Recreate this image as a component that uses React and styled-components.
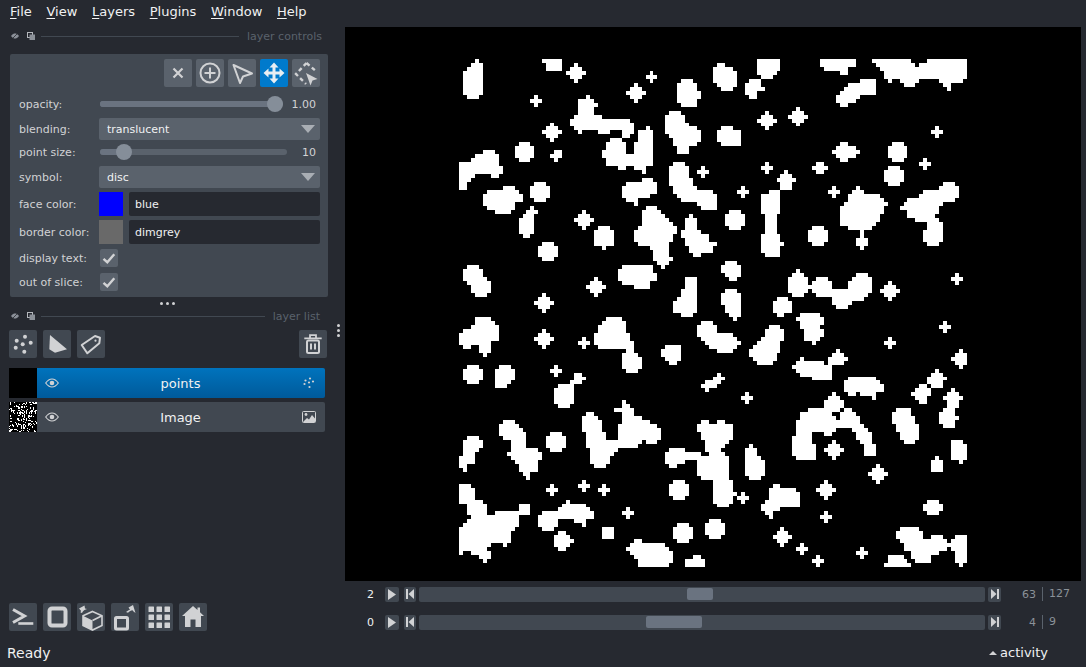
import React from 'react'
import styled, { createGlobalStyle } from 'styled-components'

const ICON = '#d1d2d4'
const PANEL = '#414851'
const PRIMARY = '#5a626c'

// blobs traced from the picture, coordinates are 3x crops with an offset
const REGIONS = [
  {
    ox: 450, oy: 50,
    stars: [[378, 69, 2], [603, 81, 1], [557, 127, 2], [258, 150, 1], [306, 246, 2], [759, 366, 1], [402, 510, 2], [438, 711, 2], [282, 759, 2]],
    discs: [[222, 306], [270, 426], [294, 603]],
    polys: [
      [75,39,75,27,87,27,87,39,99,39,99,132,87,132,87,144,51,144,51,132,39,132,39,63,51,63,51,51,63,51,63,39],
      [276,27,336,27,336,63,288,63,288,39,276,39],
      [693,87,729,87,729,99,741,99,741,123,753,123,753,144,741,144,741,168,693,168,693,156,681,156,681,99,693,99],
      [384,144,408,144,408,132,420,132,420,144,432,144,432,156,444,156,444,168,432,168,432,192,456,192,456,204,540,204,540,216,552,216,552,252,540,252,540,264,516,264,516,240,480,240,480,252,444,252,444,240,396,240,396,252,384,252,384,240,372,240,372,228,360,228,360,204,372,204,372,192,384,192],
      [492,264,516,264,516,276,528,276,528,312,552,312,552,276,564,276,564,240,588,240,588,228,600,228,600,240,609,240,609,348,588,348,588,360,585,372,576,372,576,360,552,360,552,348,528,348,528,360,504,360,504,348,468,348,468,324,456,324,456,300,468,300,468,276,480,276,480,264],
      [657,180,693,180,693,192,705,192,705,216,717,216,717,228,741,228,741,240,753,240,753,276,741,276,741,288,717,288,717,312,681,312,681,288,669,288,669,264,657,264,657,252,645,252,645,192,657,192],
      [312,300,336,300,336,324,324,324,324,336,312,336,312,324,300,324,300,312,312,312],
      [99,300,135,300,135,312,147,312,147,348,156,348,156,372,147,372,147,384,123,384,123,372,75,372,75,384,63,384,63,396,51,396,51,420,27,420,27,336,63,336,63,324,75,324,75,312,99,312],
      [159,408,192,408,192,420,204,420,204,432,216,432,216,456,192,456,192,480,180,480,180,492,135,492,135,480,111,480,111,468,99,468,99,432,111,432,111,420,159,420],
      [576,384,609,384,609,396,621,396,621,432,597,432,597,444,564,444,564,468,552,468,552,456,528,456,528,444,516,444,516,408,528,408,528,396,576,396],
      [669,336,705,336,705,348,717,348,717,384,729,384,729,408,741,408,741,420,789,420,789,432,801,432,801,480,753,480,753,468,741,468,741,456,693,456,693,444,681,444,681,432,669,432,669,408,657,408,657,348,669,348],
      [240,468,252,468,252,480,264,480,264,492,252,492,252,552,240,552,240,560,216,560,216,552,204,552,204,504,216,504,216,492,228,492,228,480,240,480],
      [444,528,480,528,480,540,492,540,492,585,468,585,468,597,456,597,456,585,432,585,432,540,444,540],
      [588,468,621,468,621,480,633,480,633,492,645,492,645,504,657,504,657,516,669,516,669,528,681,528,681,552,669,552,669,572,657,572,657,620,669,620,669,632,657,632,657,644,645,644,645,656,633,656,633,644,621,644,621,632,609,632,609,597,597,597,597,585,564,585,564,572,552,572,552,540,564,540,564,528,576,528,576,480,588,480],
      [717,492,729,492,729,504,741,504,741,540,753,540,753,552,777,552,777,572,801,572,801,585,789,585,789,609,753,609,753,620,729,620,729,609,717,609,717,585,705,585,705,560,693,560,693,540,705,540,705,504,717,504],
      [51,645,87,645,87,657,99,657,99,681,111,681,111,693,123,693,123,729,111,729,111,740,75,740,75,729,63,729,63,705,51,705,51,693,39,693,39,657,51,657],
      [516,645,609,645,609,669,621,669,621,693,597,693,597,717,552,717,552,705,516,705,516,693,504,693,504,657,516,657],
      [705,681,741,681,741,789,729,789,729,801,693,801,693,789,669,789,669,753,681,753,681,741,693,741,693,717,705,717],
    ],
  },
  {
    ox: 710, oy: 50,
    stars: [[171, 210, 2], [264, 198, 2], [681, 246, 1], [645, 342, 1], [171, 354, 1], [99, 426, 1], [372, 426, 1], [741, 687, 1], [540, 723, 2]],
    discs: [[564, 306], [552, 378], [75, 510], [324, 558]],
    polys: [
      [21,39,45,39,45,51,69,51,69,63,81,63,81,111,69,111,69,123,33,123,33,111,21,111,21,99,9,99,9,51,21,51],
      [141,27,213,27,213,63,201,63,201,75,189,75,189,87,153,87,153,75,141,75],
      [117,87,153,87,153,111,165,111,165,123,141,123,141,144,117,144,117,132,105,132,105,99,117,99],
      [330,27,438,27,438,51,414,51,414,75,390,75,390,63,342,63,342,51,330,51],
      [486,27,606,27,606,39,618,39,618,51,630,51,630,39,654,39,654,27,771,27,771,87,759,87,759,99,723,99,723,123,711,123,711,111,699,111,699,99,687,99,687,87,630,87,630,99,618,99,618,111,582,111,582,99,570,99,570,87,546,87,546,99,534,99,534,87,522,87,522,63,510,63,510,51,498,51,498,39,486,39],
      [450,87,498,87,498,132,450,132,450,144,438,144,438,156,414,156,414,168,390,168,390,156,378,156,378,132,390,132,390,120,402,120,402,108,414,108,414,99,450,99],
      [33,228,69,228,69,240,93,240,93,288,33,288,33,276,21,276,21,240,33,240],
      [390,276,414,276,414,288,438,288,438,300,450,300,450,312,438,312,438,324,414,324,414,336,390,336,390,324,378,324,378,312,366,312,366,300,378,300,378,288,390,288],
      [318,336,342,336,342,348,354,348,354,360,342,360,342,372,318,372,318,360,306,360,306,348,318,348],
      [222,360,234,360,234,372,246,372,246,384,258,384,258,396,246,396,246,420,210,420,210,396,201,396,201,384,210,384,210,372,222,372],
      [177,420,213,420,213,492,201,492,201,549,213,549,213,573,222,573,222,585,213,585,213,621,165,621,165,609,153,609,153,549,165,549,165,492,153,492,153,432,177,432],
      [438,408,450,408,450,420,462,420,462,432,510,432,510,444,522,444,522,456,534,456,534,468,522,468,522,492,510,492,510,516,498,516,498,528,486,528,486,540,414,540,414,528,390,528,390,468,402,468,402,456,414,456,414,432,426,432,426,420,438,420],
      [450,540,462,540,462,561,474,561,474,585,462,585,462,597,450,597,450,585,438,585,438,561,450,561],
      [699,396,735,396,735,408,747,408,747,444,735,444,735,456,699,456,699,468,687,468,687,492,675,492,675,504,687,504,687,516,699,516,699,573,687,573,687,585,651,585,651,573,642,573,642,540,651,540,651,516,618,516,618,504,594,504,594,480,570,480,570,468,582,468,582,456,594,456,594,444,630,444,630,432,642,432,642,420,687,420,687,408,699,408],
      [45,633,81,633,81,645,93,645,93,681,81,681,81,693,57,693,57,681,45,681,45,669,33,669,33,645,45,645],
      [45,717,81,717,81,729,93,729,93,801,81,801,81,813,69,813,69,801,57,801,57,789,45,789,45,765,33,765,33,729,45,729],
      [201,741,237,741,237,753,246,753,246,789,225,789,225,801,201,801,201,789,189,789,189,753,201,753],
      [258,657,270,657,270,669,282,669,282,681,294,681,294,705,306,705,306,693,318,693,318,681,354,681,354,693,366,693,366,717,414,717,414,693,426,693,426,681,438,681,438,669,474,669,474,681,486,681,486,729,474,729,474,741,462,741,462,753,426,753,426,765,414,765,414,777,378,777,378,765,366,765,366,741,318,741,318,729,306,729,306,717,294,717,294,729,282,729,282,741,246,741,246,729,234,729,234,681,246,681,246,669,258,669],
    ],
  },
  {
    ox: 450, oy: 305,
    stars: [[282, 102, 2], [402, 114, 1], [318, 198, 1], [306, 555, 1], [402, 543, 1], [462, 555, 1], [534, 627, 1]],
    discs: [[69, 210], [318, 411], [687, 555], [699, 684]],
    polys: [
      [75,36,123,36,123,48,135,48,135,60,147,60,147,108,123,108,123,144,111,144,111,156,99,156,99,144,87,144,87,120,63,120,63,132,39,132,39,120,27,120,27,84,39,84,39,72,63,72,63,60,75,60],
      [468,36,516,36,516,48,528,48,528,84,540,84,540,108,552,108,552,144,564,144,564,156,576,156,576,192,564,192,564,204,528,204,528,192,516,192,516,144,528,144,528,132,444,132,444,120,432,120,432,84,444,84,444,60,456,60,456,48,468,48],
      [645,120,693,120,693,168,681,168,681,180,657,180,657,168,645,168,645,156,633,156,633,132,645,132],
      [753,48,789,48,789,60,801,60,801,84,849,84,849,96,861,96,861,108,873,108,873,120,861,120,861,132,849,132,849,144,801,144,801,132,780,132,780,120,768,120,768,108,753,108,753,96,741,96,741,60,753,60],
      [147,180,180,180,180,192,192,192,192,228,180,228,180,237,168,237,168,249,135,249,135,192,147,192],
      [372,204,396,204,396,216,408,216,408,228,396,228,396,237,372,237,372,297,360,297,360,309,324,309,324,297,312,297,312,249,324,249,324,237,360,237,360,225,372,225],
      [801,204,813,204,813,216,825,216,825,228,813,228,813,237,801,237,801,249,777,249,777,261,765,261,765,249,753,249,753,237,765,237,765,228,789,228,789,216,801,216],
      [516,285,528,285,528,297,540,297,540,309,552,309,552,333,576,333,576,345,597,345,597,357,621,357,621,369,633,369,633,405,621,405,621,417,585,417,585,405,576,405,576,417,564,417,564,429,504,429,504,441,492,441,492,453,480,453,480,477,468,477,468,489,432,489,432,477,420,477,420,429,408,429,408,381,396,381,396,333,408,333,408,321,432,321,432,333,444,333,444,345,456,345,456,381,468,381,468,405,504,405,504,357,516,357,516,321,492,321,492,309,516,309],
      [159,345,192,345,192,357,204,357,204,369,216,369,216,381,228,381,228,429,264,429,264,441,276,441,276,465,264,465,264,501,240,501,240,525,228,525,228,513,216,513,216,501,204,501,204,477,192,477,192,465,180,465,180,453,168,453,168,441,180,441,180,405,159,405,159,393,147,393,147,357,159,357],
      [51,393,87,393,87,405,99,405,99,429,87,429,87,441,75,441,75,477,51,477,51,500,39,500,39,489,27,489,27,453,39,453,39,405,51,405],
      [741,357,753,357,753,345,777,345,777,357,801,357,801,345,825,345,825,357,849,357,849,405,837,405,837,417,825,417,825,429,813,429,813,441,825,441,825,453,837,453,837,525,849,525,849,561,861,561,861,573,849,573,849,597,837,597,837,609,801,609,801,597,789,597,789,525,753,525,753,513,741,513,741,465,705,465,705,477,681,477,681,489,657,489,657,477,645,477,645,441,657,441,657,429,705,429,705,441,753,441,753,453,777,453,777,441,765,441,765,405,753,405,753,381,741,381],
      [27,537,63,537,63,549,75,549,75,585,99,585,99,597,111,597,111,633,135,633,135,621,204,621,204,597,240,597,240,633,204,633,204,665,192,665,192,677,180,677,180,713,168,713,168,725,156,725,156,713,123,713,123,725,111,725,111,737,123,737,123,761,111,761,111,773,99,773,99,761,87,761,87,749,63,749,63,737,39,737,39,749,27,749,27,665,39,665,39,653,51,653,51,641,63,641,63,633,51,633,51,597,27,597],
      [348,585,360,585,360,597,408,597,408,609,420,609,420,621,432,621,432,641,408,641,408,665,396,665,396,653,372,653,372,641,324,641,324,665,312,665,312,677,276,677,276,665,264,665,264,633,276,633,276,621,324,621,324,609,336,609,336,597,348,597],
      [324,678,348,678,348,690,360,690,360,702,372,702,372,714,360,714,360,726,348,726,348,738,324,738,324,726,312,726,312,690,324,690],
      [456,665,492,665,492,702,456,702],
      [777,642,813,642,813,654,825,654,825,690,813,690,813,702,777,702,777,690,765,690,765,654,777,654],
      [552,702,576,702,576,714,645,714,645,726,657,726,657,738,669,738,669,774,657,774,657,787,564,787,564,762,552,762,552,750,540,750,540,738,528,738,528,726,540,726,540,714,552,714],
      [717,762,729,762,729,750,753,750,753,762,765,762,765,787,705,787,705,762],
    ],
  },
  {
    ox: 710, oy: 305,
    stars: [[99, 579, 1], [705, 66, 1], [540, 114, 1], [111, 279, 1], [372, 435, 2], [504, 507, 2], [348, 555, 2], [348, 636, 1], [216, 696, 2], [276, 732, 1], [324, 768, 1], [456, 744, 1]],
    discs: [],
    polys: [
      [270,24,330,24,330,36,342,36,342,60,330,60,330,72,342,72,342,96,330,96,330,108,318,108,318,120,306,120,306,108,282,108,282,72,270,72,270,48,258,48,258,36,270,36],
      [180,60,210,60,210,72,222,72,222,108,210,108,210,144,198,144,198,168,189,168,189,180,141,180,141,168,129,168,129,156,117,156,117,132,129,132,129,120,141,120,141,108,153,108,153,96,165,96,165,72,180,72],
      [747,132,759,132,759,144,771,144,771,180,759,180,759,192,747,192,747,180,735,180,735,168,723,168,723,156,735,156,735,144,747,144],
      [378,132,390,132,390,144,402,144,402,156,414,156,414,168,402,168,402,180,366,180,366,225,306,225,306,213,270,213,270,201,258,201,258,192,246,192,246,180,258,180,258,168,270,168,270,156,282,156,282,168,342,168,342,180,354,180,354,156,366,156,366,144,378,144],
      [414,213,498,213,498,225,510,225,510,237,522,237,522,261,498,261,498,285,486,285,486,273,450,273,450,261,438,261,438,273,414,273,414,261,402,261,402,225,414,225],
      [675,192,687,192,687,204,699,204,699,216,711,216,711,225,699,225,699,249,663,249,663,237,651,237,651,216,663,216,663,204,675,204],
      [627,237,651,237,651,249,663,249,663,273,651,273,651,297,627,297,627,285,615,285,615,273,606,273,606,261,615,261,615,249,627,249],
      [723,249,735,249,735,261,747,261,747,273,759,273,759,285,747,285,747,309,735,309,735,333,747,333,747,345,735,345,735,369,699,369,699,357,687,357,687,321,699,321,699,309,711,309,711,285,699,285,699,273,711,273,711,261,723,261],
      [366,261,378,261,378,273,390,273,390,285,402,285,402,309,426,309,426,321,438,321,438,333,450,333,450,357,462,357,462,369,474,369,474,381,486,381,486,417,498,417,498,453,462,453,462,417,450,417,450,405,438,405,438,381,426,381,426,369,378,369,378,381,366,381,366,393,342,393,342,381,306,381,306,417,318,417,318,465,258,465,258,453,246,453,246,393,258,393,258,345,270,345,270,321,294,321,294,309,342,309,342,285,354,285,354,273,366,273],
      [558,309,606,309,606,333,618,333,618,357,630,357,630,405,618,405,618,417,582,417,582,405,570,405,570,381,558,381,558,357,546,357,546,321,558,321],
      [723,405,759,405,759,417,771,417,771,465,759,465,759,477,747,477,747,465,723,465],
      [675,465,675,453,687,453,687,465,699,465,699,501,663,501,663,465],
      [117,417,129,417,129,429,141,429,141,453,153,453,153,465,165,465,165,513,153,513,153,525,117,525,117,513,105,513,105,429,117,429],
      [189,537,213,537,213,549,258,549,258,561,270,561,270,609,213,609,213,621,189,621,189,642,177,642,177,630,165,630,165,621,153,621,153,597,165,597,165,585,177,585,177,549,189,549],
      [654,585,687,585,687,597,699,597,699,621,687,621,687,633,654,633,654,621,642,621,642,597,654,597],
      [570,666,630,666,630,678,642,678,642,702,660,702,660,690,699,690,699,702,711,702,711,714,723,714,723,702,735,702,735,690,771,690,771,774,759,774,759,787,747,787,747,774,735,774,735,738,723,738,723,726,711,726,711,738,687,738,687,750,663,750,663,774,618,774,618,762,606,762,606,738,582,738,582,714,570,714,570,702,558,702,558,678,570,678],
      [534,762,534,750,582,750,582,762,594,762,594,774,606,774,606,787,522,787,522,774,534,774],
    ],
    holes: [[366,321,390,321,390,345,378,345,378,333,366,333], [390,309,402,309,402,321,390,321]],
  },
]

// the image is 128 cells wide, drawn over 508 screen pixels
const GRID_SIZE = 128
const GRID_X = 459
const GRID_Y = 59
const PITCH = 508 / GRID_SIZE

const inside = (pts, x, y) => {
  let hit = false
  for (let i = 0, j = pts.length - 2; i < pts.length; j = i, i += 2) {
    const yi = pts[i + 1]
    const yj = pts[j + 1]
    if (yi > y !== yj > y && x < ((pts[j] - pts[i]) * (y - yi)) / (yj - yi) + pts[i]) hit = !hit
  }
  return hit
}

const buildGrid = () => {
  const grid = Array.from({ length: GRID_SIZE }, () => new Array(GRID_SIZE).fill(false))
  const set = (c, r, value) => {
    if (grid[r] && c >= 0 && c < GRID_SIZE) grid[r][c] = value
  }
  const fillPoly = (region, pts, value) => {
    for (let r = 0; r < GRID_SIZE; r++) {
      for (let c = 0; c < GRID_SIZE; c++) {
        const x = (GRID_X + PITCH * (c + 0.5) - region.ox) * 3
        const y = (GRID_Y + PITCH * (r + 0.5) - region.oy) * 3
        if (inside(pts, x, y)) set(c, r, value)
      }
    }
  }
  const toCell = (region, x, y) => [
    Math.floor((x / 3 + region.ox - GRID_X) / PITCH),
    Math.floor((y / 3 + region.oy - GRID_Y) / PITCH),
  ]
  REGIONS.forEach(region => {
    region.polys.forEach(pts => fillPoly(region, pts, true))
    region.stars.forEach(([x, y, size]) => {
      const [c, r] = toCell(region, x, y)
      for (let dy = -size; dy <= size; dy++) {
        for (let dx = -size; dx <= size; dx++) {
          if (Math.abs(dx) + Math.abs(dy) <= size) set(c + dx, r + dy, true)
        }
      }
    })
    region.discs.forEach(([x, y]) => {
      const [c, r] = toCell(region, x, y)
      for (let dy = -2; dy <= 2; dy++) {
        for (let dx = -2; dx <= 2; dx++) {
          if (dx * dx + dy * dy <= 5) set(c + dx, r + dy, true)
        }
      }
    })
  })
  REGIONS.forEach(region => (region.holes || []).forEach(pts => fillPoly(region, pts, false)))
  return grid
}

const gridToPath = rows => {
  let d = ''
  rows.forEach((row, r) => {
    let start = -1
    for (let c = 0; c <= row.length; c++) {
      if (row[c] && start < 0) start = c
      if (!row[c] && start >= 0) {
        d += `M${start} ${r}h${c - start}v1h${start - c}z`
        start = -1
      }
    }
  })
  return d
}

const GRID = buildGrid()
const IMAGE_PATH = gridToPath(GRID)
const THUMB_PATH = gridToPath(
  Array.from({ length: 30 }, (_, r) =>
    Array.from({ length: 28 }, (_, c) => GRID[Math.floor((r * GRID_SIZE) / 30)][Math.floor((c * GRID_SIZE) / 28)]),
  ),
)

const GlobalStyle = createGlobalStyle`
  html, body {
    margin: 0;
    padding: 0;
    background: #262930;
  }
  * {
    box-sizing: border-box;
  }
`

const Window = styled.div`
  width: 1086px;
  height: 667px;
  display: flex;
  flex-direction: column;
  overflow: hidden;
  background: #262930;
  color: #f0f1f2;
  font-family: "DejaVu Sans", sans-serif;
`

const MenuBar = styled.div`
  height: 27px;
  flex: none;
  display: flex;
  gap: 14.7px;
  padding: 3px 0 0 10px;
  font-size: 13px;
  line-height: 17px;
  color: #f0f1f2;
  u {
    text-underline-offset: 2px;
  }
`

const Main = styled.div`
  flex: 1;
  display: flex;
  min-height: 0;
`

const LeftDock = styled.div`
  width: 330px;
  flex: none;
  display: flex;
  flex-direction: column;
  padding-bottom: 9px;
`

const TitleBar = styled.div`
  height: 18px;
  flex: none;
  display: flex;
  align-items: center;
  padding-left: 11px;
  font-size: 11px;
  color: ${PRIMARY};
`

const TitleIconGroup = styled.div`
  display: flex;
  gap: 8px;
  align-items: center;
  svg {
    display: block;
  }
`

const TitleLine = styled.div`
  flex: 1;
  height: 1px;
  margin: 0 8px 0 6px;
  background: ${PANEL};
`

const TitleLabel = styled.span`
  margin-right: ${props => props.$right}px;
  padding-top: 2px;
  line-height: 18px;
`

const ControlsPanel = styled.div`
  margin: 9px 2px 0 10px;
  height: 243px;
  padding: 5px 8px 0 9px;
  background: ${PANEL};
  border-radius: 2px;
  display: flex;
  flex-direction: column;
`

const ModeButtons = styled.div`
  display: flex;
  justify-content: flex-end;
  gap: 4px;
  margin-bottom: 5px;
`

const IconButton = styled.div`
  width: 28px;
  height: 28px;
  flex: none;
  border-radius: 2px;
  background: ${props => (props.$active ? '#007acc' : props.$tone || PANEL)};
  svg {
    display: block;
  }
`

const ControlRow = styled.div`
  height: ${props => props.$h}px;
  margin-top: ${props => props.$mt || 0}px;
  flex: none;
  display: flex;
  align-items: center;
  font-size: 11px;
  color: #d1d2d4;
`

const RowLabel = styled.div`
  width: 80px;
  flex: none;
  white-space: nowrap;
`

const SliderTrack = styled.div`
  width: ${props => props.$w}px;
  height: 6px;
  margin-left: 1px;
  border-radius: 3px;
  flex: none;
  display: flex;
  align-items: center;
  background: ${props => props.$tone || PRIMARY};
`

const SliderFill = styled.div`
  width: ${props => props.$w}px;
  height: 6px;
  flex: none;
  border-radius: 3px 0 0 3px;
  background: #6a7380;
`

const SliderThumb = styled.div`
  width: 16px;
  height: 16px;
  flex: none;
  margin-left: -8px;
  border-radius: 50%;
  background: #858e99;
`

const SliderValue = styled.div`
  margin-left: auto;
  width: 30px;
  margin-right: 4px;
  text-align: right;
  color: #d1d2d4;
`

const Combo = styled.div`
  width: 221px;
  height: 22px;
  flex: none;
  display: flex;
  align-items: center;
  justify-content: space-between;
  padding: 0 5px 0 8px;
  border-radius: 2px;
  background: ${PRIMARY};
  color: #f0f1f2;
  &::after {
    content: '';
    border-left: 7.5px solid transparent;
    border-right: 7.5px solid transparent;
    border-top: 8px solid #a9aeb4;
  }
`

const Swatch = styled.div`
  width: 24px;
  height: 24px;
  flex: none;
  background: ${props => props.$color};
`

const ColorInput = styled.div`
  width: 191px;
  height: 24px;
  margin-left: 6px;
  flex: none;
  padding-left: 6px;
  line-height: 25px;
  border-radius: 2px;
  background: #262930;
  color: #f0f1f2;
`

const CheckBox = styled.div`
  width: 18px;
  height: 18px;
  margin-left: 1px;
  flex: none;
  border-radius: 2px;
  background: ${PRIMARY};
  svg {
    display: block;
  }
`

const DotsHandle = styled.div`
  height: 10px;
  flex: none;
  display: flex;
  justify-content: center;
  align-items: flex-end;
  gap: 3px;
  padding: 0 0 2px 5px;
  span {
    width: 3px;
    height: 3px;
    border-radius: 50%;
    background: #d1d2d4;
  }
`

const LayerButtons = styled.div`
  margin-top: 5px;
  padding: 0 3px 0 9px;
  display: flex;
  gap: 6px;
`

const DeleteSlot = styled.div`
  margin-left: auto;
`

const LayerRows = styled.div`
  margin: 10px 5px 0 9px;
  display: flex;
  flex-direction: column;
  gap: 4px;
`

const LayerRow = styled.div`
  height: 30px;
  display: flex;
  align-items: stretch;
`

const LayerThumb = styled.div`
  width: 28px;
  flex: none;
  background: #000;
  svg {
    display: block;
  }
`

const LayerBody = styled.div`
  flex: 1;
  display: flex;
  align-items: center;
  padding: 0 9px 0 8px;
  border-radius: 0 2px 2px 0;
  font-size: 13px;
  color: #f0f1f2;
  background: ${props => (props.$selected ? 'linear-gradient(#0073bd, #005a9a)' : PANEL)};
`

const LayerName = styled.div`
  flex: 1;
  text-align: center;
`

const Spacer = styled.div`
  flex: 1;
`

const BottomButtons = styled.div`
  padding-left: 9px;
  display: flex;
  gap: 6px;
`

const Splitter = styled.div`
  width: 15px;
  flex: none;
  display: flex;
  flex-direction: column;
  align-items: center;
  justify-content: center;
  gap: 2px;
  padding: 0 0 6px 1px;
  span {
    width: 3px;
    height: 3px;
    border-radius: 50%;
    background: #d1d2d4;
  }
`

const ViewerColumn = styled.div`
  width: 736px;
  flex: none;
  display: flex;
  flex-direction: column;
`

const Canvas = styled.div`
  height: 554px;
  flex: none;
  background: #000;
  display: flex;
  justify-content: center;
  align-items: flex-start;
  padding: 32px 0 0 0;
  svg {
    display: block;
  }
`

const DimRow = styled.div`
  height: 26px;
  margin-bottom: 2px;
  flex: none;
  display: flex;
  align-items: center;
`

const DimLabel = styled.div`
  width: 29px;
  flex: none;
  text-align: right;
  font-size: 11px;
  color: #f0f1f2;
`

const DimButton = styled.div`
  width: ${props => props.$w}px;
  height: 15px;
  margin-left: ${props => props.$ml}px;
  flex: none;
  border-radius: 2px;
  background: ${PANEL};
  display: flex;
  align-items: center;
  justify-content: center;
  svg {
    display: block;
  }
`

const DimTrack = styled.div`
  width: 566px;
  height: 15px;
  margin-left: 3px;
  flex: none;
  border-radius: 2px;
  background: ${PANEL};
  display: flex;
  align-items: center;
`

const DimThumb = styled.div`
  width: ${props => props.$w}px;
  height: 12px;
  margin-left: ${props => props.$left}px;
  border-radius: 2px;
  background: #6a7380;
`

const FrameValue = styled.div`
  width: 35px;
  flex: none;
  text-align: right;
  font-size: 11px;
  color: #8b9299;
`

const FrameTotal = styled.div`
  margin-left: 6px;
  padding-left: 6px;
  border-left: 1px solid #5a626c;
  line-height: 14px;
  font-size: 11px;
  color: #8b9299;
`

const StatusBar = styled.div`
  height: 27px;
  flex: none;
  display: flex;
  align-items: center;
  justify-content: space-between;
  padding: 0 38px 2px 7px;
  font-size: 14px;
  color: #f0f1f2;
`

const Activity = styled.div`
  display: flex;
  align-items: center;
  gap: 3px;
  font-size: 13px;
  &::before {
    content: '';
    border-left: 4px solid transparent;
    border-right: 4px solid transparent;
    border-bottom: 4px solid #d1d2d4;
  }
`

const Glyph = ({ children, size = 28 }) => (
  <svg width={size} height={size} viewBox={`0 0 ${size} ${size}`}>
    {children}
  </svg>
)

const CloseIcon = () => (
  <Glyph>
    <path d="M9.5 9.5l9 9M18.5 9.5l-9 9" stroke={ICON} strokeWidth="2.2" fill="none" />
  </Glyph>
)

const AddIcon = () => (
  <Glyph>
    <circle cx="14" cy="14" r="9.5" stroke={ICON} strokeWidth="2" fill="none" />
    <path d="M14 8.5v11M8.500 14h11" stroke={ICON} strokeWidth="2" fill="none" />
  </Glyph>
)

const SelectIcon = () => (
  <Glyph>
    <path d="M5.5 6L24 14.5l-9 3L12 24z" stroke={ICON} strokeWidth="2" fill="none" strokeLinejoin="round" />
  </Glyph>
)

const MoveIcon = () => (
  <Glyph>
    <path d="M14 7v14M7 14h14" stroke="#e8eef3" strokeWidth="3" fill="none" />
    <path d="M14 3.5l4.5 5h-9zM14 24.5l4.5-5h-9zM3.5 14l5-4.5v9zM24.5 14l-5-4.5v9z" fill="#e8eef3" />
  </Glyph>
)

const TransformIcon = () => (
  <Glyph>
    <path d="M14.500 4L25 13M14.500 4L4 15l10 10" stroke={ICON} strokeWidth="2.400" strokeDasharray="4 3" fill="none" />
    <path d="M14 14l11.500 6-5 1.500-2 5z" fill={ICON} />
  </Glyph>
)

const EyeIcon = () => (
  <svg width="14" height="10" viewBox="0 0 14 10">
    <path d="M.7 5C3 1.800 5 1 7 1s4 .8 6.300 4C11 8.200 9 9 7 9S3 8.200.7 5z" stroke={ICON} strokeWidth="1.200" fill="none" />
    <circle cx="7" cy="5" r="2.300" fill={ICON} />
  </svg>
)

const PointsIcon = () => (
  <Glyph>
    {[[16, 6.7], [7.7, 10.7], [21.7, 12.7], [13.7, 14.3], [6.7, 17.7], [15.3, 21.7]].map(([x, y]) => (
      <circle key={x} cx={x} cy={y} r="2" fill={ICON} />
    ))}
  </Glyph>
)

const ShapeIcon = () => (
  <Glyph>
    <path d="M7 5l17 14.300-12 3.400-5.700-3.400z" fill={ICON} />
  </Glyph>
)

const LabelIcon = () => (
  <Glyph>
    <path d="M4.700 15L18 6l5 1.700-.7 5.600-12 10z" stroke={ICON} strokeWidth="2" fill="none" strokeLinejoin="round" />
    <circle cx="18.500" cy="10.700" r="1.100" fill={ICON} />
  </Glyph>
)

const TrashIcon = () => (
  <Glyph>
    <path d="M5.300 8.300h17.400M11 8V5.200h6V8" stroke={ICON} strokeWidth="1.800" fill="none" />
    <rect x="8" y="10.500" width="12" height="12.500" rx="1.500" stroke={ICON} strokeWidth="2" fill="none" />
    <path d="M12 13.500v6M16 13.500v6" stroke={ICON} strokeWidth="2" fill="none" />
  </Glyph>
)

const SmallPointsIcon = () => (
  <svg width="14" height="12" viewBox="0 0 14 12">
    {[[8, 1.5], [3.5, 3.5], [11, 4.5], [7, 5.5], [2.5, 7], [7.5, 10]].map(([x, y]) => (
      <circle key={x} cx={x} cy={y} r="1.100" fill={ICON} />
    ))}
  </svg>
)

const ImageIcon = () => (
  <svg width="14" height="12" viewBox="0 0 14 12">
    <rect x=".5" y=".5" width="13" height="11" rx="1" stroke={ICON} fill="none" />
    <circle cx="4" cy="3.500" r="1.400" fill={ICON} />
    <path d="M1 11l4-4 2 1.500L10 4l3 3.500V11z" fill={ICON} />
  </svg>
)

const ConsoleIcon = () => (
  <Glyph>
    <path d="M4 6.500l11.500 6.500L4 19.500" stroke={ICON} strokeWidth="3" fill="none" />
    <path d="M9.300 20.500h15" stroke={ICON} strokeWidth="2.600" fill="none" />
  </Glyph>
)

const SquareIcon = () => (
  <Glyph>
    <rect x="6.500" y="5.500" width="16" height="17" rx="2.500" stroke={ICON} strokeWidth="4" fill="none" />
  </Glyph>
)

const CubeIcon = () => (
  <Glyph>
    <path d="M15.500 8.500l9.500 4.300v9.700l-9.500 4.500-9.500-4.500v-9.700z" stroke={ICON} strokeWidth="1.600" fill="none" />
    <path d="M6 12.800l9.500 4.700v9.500L6 22.500z" fill={ICON} />
    <path d="M15.500 17.500l9.500-4.700" stroke={ICON} strokeWidth="1.600" fill="none" />
    <path d="M2 5.500l5.500-3 .5 3 2 .5-2.500 1C6 8 5.500 9 5 10L3.500 9.500 4 7.800z" fill={ICON} />
  </Glyph>
)

const RollIcon = () => (
  <Glyph>
    <rect x="4.500" y="14.500" width="12" height="11.500" rx="1" stroke={ICON} strokeWidth="3" fill="none" />
    <path d="M15 9c1.500-1.300 2.800-2 4-2.300L17.500 4.500 22 2l2.500 8-2-1.500-1-1.200c-1.500.3-3 1-4.500 2.400z" fill={ICON} />
  </Glyph>
)

const GridIcon = () => (
  <Glyph>
    {[3.5, 11.5, 19.5].flatMap(y =>
      [3.5, 11.5, 19.5].map(x => <rect key={`${x}-${y}`} x={x} y={y} width="5.500" height="5.500" rx=".5" fill={ICON} />),
    )}
  </Glyph>
)

const HomeIcon = () => (
  <Glyph>
    <path d="M14 3l4.500 4V4.500H21V9.300l4 3.700h-3v11h-5.500v-7.500h-5V24H6V13H3z" fill={ICON} />
  </Glyph>
)

const CheckIcon = () => (
  <svg width="18" height="18" viewBox="0 0 18 18">
    <path d="M3.500 9.800l3.800 3.400 7-8" stroke={ICON} strokeWidth="2.400" fill="none" />
  </svg>
)

const PeekIcon = () => (
  <svg width="8" height="6" viewBox="0 0 8 6">
    <path d="M0 3C1.500 1 2.800.5 4 .5S6.500 1 8 3C6.500 5 5.200 5.500 4 5.500S1.500 5 0 3z" fill="#8b9098" />
    <path d="M1.500 5.500L6.500.5" stroke="#262930" strokeWidth=".8" />
  </svg>
)

const FloatIcon = () => (
  <svg width="8" height="8" viewBox="0 0 8 8">
    <rect x=".5" y=".5" width="5" height="5" stroke="#b5b8bd" fill="none" />
    <rect x="2.500" y="2.500" width="5.500" height="5.500" fill="#8b9098" />
  </svg>
)

const PlayIcon = () => (
  <svg width="8" height="11" viewBox="0 0 8 11">
    <path d="M0 0l8 5.500L0 11z" fill={ICON} />
  </svg>
)

const SkipIcon = ({ flip }) => (
  <svg width="8" height="10" viewBox="0 0 8 10">
    <path d={flip ? 'M0 0l5.500 5L0 10zM6 0h2v10H6z' : 'M8 0L2.500 5 8 10zM0 0h2v10H0z'} fill={ICON} />
  </svg>
)

const TitleIcons = () => (
  <TitleIconGroup>
    <PeekIcon />
    <FloatIcon />
  </TitleIconGroup>
)

const Dimension = ({ label, left, width, frame, total }) => (
  <DimRow>
    <DimLabel>{label}</DimLabel>
    <DimButton $w={14} $ml={11}><PlayIcon /></DimButton>
    <DimButton $w={12} $ml={5}><SkipIcon /></DimButton>
    <DimTrack><DimThumb $left={left} $w={width} /></DimTrack>
    <DimButton $w={13} $ml={3}><SkipIcon flip /></DimButton>
    <FrameValue>{frame}</FrameValue>
    <FrameTotal>{total}</FrameTotal>
  </DimRow>
)

const App = () => (
  <Window>
    <GlobalStyle />
    <MenuBar>
      <span><u>F</u>ile</span>
      <span><u>V</u>iew</span>
      <span><u>L</u>ayers</span>
      <span><u>P</u>lugins</span>
      <span><u>W</u>indow</span>
      <span><u>H</u>elp</span>
    </MenuBar>
    <Main>
      <LeftDock>
        <TitleBar>
          <TitleIcons />
          <TitleLine />
          <TitleLabel $right={8}>layer controls</TitleLabel>
        </TitleBar>
        <ControlsPanel>
          <ModeButtons>
            <IconButton $tone={PRIMARY}><CloseIcon /></IconButton>
            <IconButton $tone={PRIMARY}><AddIcon /></IconButton>
            <IconButton $tone={PRIMARY}><SelectIcon /></IconButton>
            <IconButton $active><MoveIcon /></IconButton>
            <IconButton $tone={PRIMARY}><TransformIcon /></IconButton>
          </ModeButtons>
          <ControlRow $h={24}>
            <RowLabel>opacity:</RowLabel>
            <SliderTrack $w={183} $tone="#6a7380">
              <SliderFill $w={175} />
              <SliderThumb />
            </SliderTrack>
            <SliderValue>1.00</SliderValue>
          </ControlRow>
          <ControlRow $h={22} $mt={2}>
            <RowLabel>blending:</RowLabel>
            <Combo>translucent</Combo>
          </ControlRow>
          <ControlRow $h={20} $mt={2}>
            <RowLabel>point size:</RowLabel>
            <SliderTrack $w={187}>
              <SliderFill $w={24} />
              <SliderThumb />
            </SliderTrack>
            <SliderValue>10</SliderValue>
          </ControlRow>
          <ControlRow $h={22} $mt={4}>
            <RowLabel>symbol:</RowLabel>
            <Combo>disc</Combo>
          </ControlRow>
          <ControlRow $h={24} $mt={4}>
            <RowLabel>face color:</RowLabel>
            <Swatch $color="#0000ff" />
            <ColorInput>blue</ColorInput>
          </ControlRow>
          <ControlRow $h={24} $mt={4}>
            <RowLabel>border color:</RowLabel>
            <Swatch $color="#696969" />
            <ColorInput>dimgrey</ColorInput>
          </ControlRow>
          <ControlRow $h={18} $mt={5}>
            <RowLabel>display text:</RowLabel>
            <CheckBox><CheckIcon /></CheckBox>
          </ControlRow>
          <ControlRow $h={18} $mt={6}>
            <RowLabel>out of slice:</RowLabel>
            <CheckBox><CheckIcon /></CheckBox>
          </ControlRow>
        </ControlsPanel>
        <DotsHandle><span /><span /><span /></DotsHandle>
        <TitleBar>
          <TitleIcons />
          <TitleLine />
          <TitleLabel $right={10}>layer list</TitleLabel>
        </TitleBar>
        <LayerButtons>
          <IconButton><PointsIcon /></IconButton>
          <IconButton><ShapeIcon /></IconButton>
          <IconButton><LabelIcon /></IconButton>
          <DeleteSlot><IconButton><TrashIcon /></IconButton></DeleteSlot>
        </LayerButtons>
        <LayerRows>
          <LayerRow>
            <LayerThumb />
            <LayerBody $selected>
              <EyeIcon />
              <LayerName>points</LayerName>
              <SmallPointsIcon />
            </LayerBody>
          </LayerRow>
          <LayerRow>
            <LayerThumb>
              <svg width="28" height="30" viewBox="0 0 28 30" shapeRendering="crispEdges">
                <path d={THUMB_PATH} fill="#fff" />
              </svg>
            </LayerThumb>
            <LayerBody>
              <EyeIcon />
              <LayerName>Image</LayerName>
              <ImageIcon />
            </LayerBody>
          </LayerRow>
        </LayerRows>
        <Spacer />
        <BottomButtons>
          <IconButton><ConsoleIcon /></IconButton>
          <IconButton><SquareIcon /></IconButton>
          <IconButton><CubeIcon /></IconButton>
          <IconButton><RollIcon /></IconButton>
          <IconButton><GridIcon /></IconButton>
          <IconButton><HomeIcon /></IconButton>
        </BottomButtons>
      </LeftDock>
      <Splitter><span /><span /><span /></Splitter>
      <ViewerColumn>
        <Canvas>
          <svg width="508" height="508" viewBox="0 0 128 128" shapeRendering="crispEdges">
            <path d={IMAGE_PATH} fill="#fff" />
          </svg>
        </Canvas>
        <Dimension label="2" left={268} width={26} frame="63" total="127" />
        <Dimension label="0" left={227} width={56} frame="4" total="9" />
      </ViewerColumn>
    </Main>
    <StatusBar>
      <span>Ready</span>
      <Activity>activity</Activity>
    </StatusBar>
  </Window>
)

export default App
